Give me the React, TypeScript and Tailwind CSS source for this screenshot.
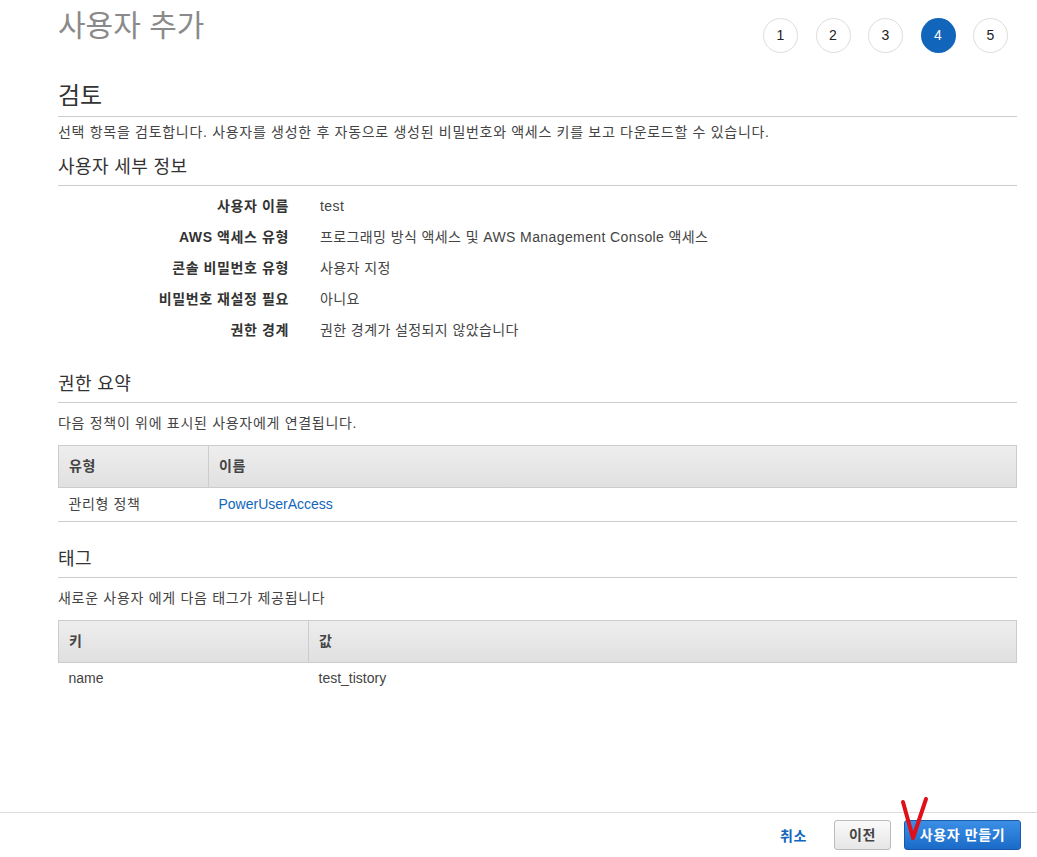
import React from "react";

const font = { fontFamily: '"Liberation Sans", Arial, "Noto Sans CJK KR", sans-serif' };

const details: [string, string][] = [
  ["사용자 이름", "test"],
  ["AWS 액세스 유형", "프로그래밍 방식 액세스 및 AWS Management Console 액세스"],
  ["콘솔 비밀번호 유형", "사용자 지정"],
  ["비밀번호 재설정 필요", "아니요"],
  ["권한 경계", "권한 경계가 설정되지 않았습니다"],
];

function Steps() {
  return (
    <div className="mr-[9px] mt-[18px] flex gap-[17.5px]">
      {[1, 2, 3, 4, 5].map((n) => (
        <div
          key={n}
          className={
            n === 4
              ? "flex h-[35px] w-[35px] items-center justify-center rounded-full bg-[#1166bb] text-[14px] text-white"
              : "flex h-[35px] w-[35px] items-center justify-center rounded-full border border-[#dddddd] bg-white text-[14px] text-[#222]"
          }
        >
          {n}
        </div>
      ))}
    </div>
  );
}

function SubHeading({ children }: { children: React.ReactNode }) {
  return (
    <h3 className="border-b border-[#cccccc] pb-[6px] text-[18px] leading-[24px] tracking-[0.4px] text-[#333]">
      {children}
    </h3>
  );
}

function DataTable({ cols, first, row }: { cols: [string, string]; first: number; row: [React.ReactNode, React.ReactNode] }) {
  return (
    <table className="w-full border-collapse text-[14px]">
      <thead>
        <tr className="h-[42px] bg-gradient-to-b from-[#eeeeee] to-[#e0e0e0]">
          <th className="border border-[#cccccc] pl-[10px] text-left font-bold tracking-[0.6px] text-[#444]" style={{ width: first }}>
            {cols[0]}
          </th>
          <th className="border border-[#cccccc] pl-[10px] text-left font-bold tracking-[0.6px] text-[#444]">{cols[1]}</th>
        </tr>
      </thead>
      <tbody>
        <tr className="h-[33px]">
          <td className="pl-[10px] text-[#444]">{row[0]}</td>
          <td className="pl-[10px] text-[#444]">{row[1]}</td>
        </tr>
      </tbody>
    </table>
  );
}

export default function App() {
  return (
    <div className="relative flex h-[857px] w-full flex-col bg-white text-[#444]" style={font}>
      <main className="flex-1 pl-[58px] pr-[20px]">
        <div className="flex items-start justify-between">
          <h1 className="pt-[8px] text-[30px] leading-[36px] text-[#8a8a8a]">사용자 추가</h1>
          <Steps />
        </div>

        <h2 className="mt-[28px] border-b border-[#cccccc] pb-[5px] text-[24px] leading-[30px] text-[#333]">검토</h2>
        <p className="mt-[6px] text-[14px] leading-[18px] tracking-[0.7px]">
          선택 항목을 검토합니다. 사용자를 생성한 후 자동으로 생성된 비밀번호와 액세스 키를 보고 다운로드할 수 있습니다.
        </p>

        <div className="mt-[14px]">
          <SubHeading>사용자 세부 정보</SubHeading>
        </div>
        <div className="pt-[5px]">
          {details.map(([k, v]) => (
            <div key={k} className="flex h-[31px] items-center text-[14px]">
              <div className="w-[231px] text-right font-bold tracking-[0.6px] text-[#333]">{k}</div>
              <div className="ml-[31px] tracking-[0.4px] text-[#444]">{v}</div>
            </div>
          ))}
        </div>

        <div className="mt-[26px]">
          <SubHeading>권한 요약</SubHeading>
        </div>
        <p className="mt-[11px] text-[14px] leading-[18px] tracking-[0.7px]">다음 정책이 위에 표시된 사용자에게 연결됩니다.</p>
        <div className="mt-[13px] border-b border-[#cccccc]">
          <DataTable
            cols={["유형", "이름"]}
            first={150}
            row={[<span className="tracking-[0.6px]">관리형 정책</span>, <span className="text-[#1166bb]">PowerUserAccess</span>]}
          />
        </div>

        <div className="mt-[25px]">
          <SubHeading>태그</SubHeading>
        </div>
        <p className="mt-[11px] text-[14px] leading-[18px] tracking-[0.7px]">새로운 사용자 에게 다음 태그가 제공됩니다</p>
        <div className="mt-[13px]">
          <DataTable cols={["키", "값"]} first={250} row={["name", "test_tistory"]} />
        </div>
      </main>

      <footer className="flex h-[45px] items-start justify-end border-t border-[#dddddd] pr-[16px] pt-[7px]">
        <button className="mr-[27px] mt-[6px] text-[14px] font-bold tracking-[0.6px] text-[#1166bb]">취소</button>
        <button className="h-[30px] w-[57px] rounded-[3px] border border-[#bbbbbb] bg-gradient-to-b from-[#fafafa] to-[#e6e6e6] text-[14px] font-bold tracking-[0.6px] text-[#444]">
          이전
        </button>
        <button className="ml-[13px] h-[30px] w-[117px] rounded-[3px] border border-[#1a5aa8] bg-gradient-to-b from-[#3b8fe6] to-[#1a6bc8] text-[14px] font-bold tracking-[0.6px] text-white">
          사용자 만들기
        </button>
      </footer>

      <svg className="absolute left-[898px] top-[795px]" width="34" height="48" viewBox="0 0 34 48" fill="none">
        <path d="M5 7 L15 43 L28 4" stroke="#e0101a" strokeWidth="4" strokeLinecap="round" strokeLinejoin="round" />
      </svg>
    </div>
  );
}
